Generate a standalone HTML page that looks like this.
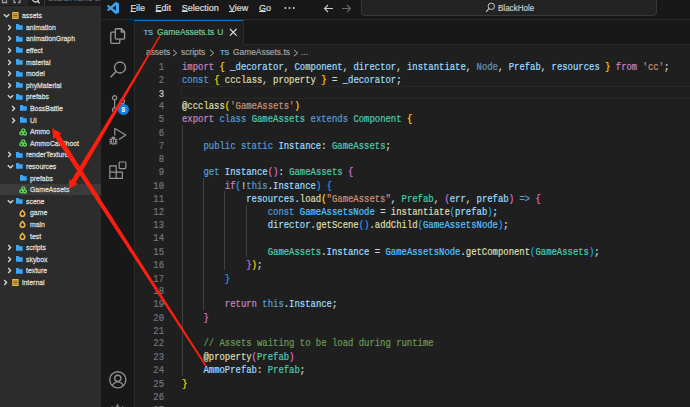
<!DOCTYPE html>
<html><head><meta charset="utf-8">
<style>
*{margin:0;padding:0;box-sizing:border-box}
html,body{width:690px;height:407px;overflow:hidden;background:#1f1f1f;position:relative;font-family:"Liberation Sans",sans-serif}
.abs{position:absolute}
#left{left:0;top:0;width:101px;height:407px;background:#2c2c2c}
#ltop{left:0;top:0;width:101px;height:6px;background:#262626;border-bottom:1px solid #1c1c1c}
.lt{position:absolute;height:11.6px;line-height:11.6px;font-size:8px;color:#d8d8d8;white-space:nowrap;transform:scaleX(0.86);transform-origin:0 0;-webkit-text-stroke:0.3px #d8d8d8}
.row{position:absolute;left:0;width:101px;height:11.6px;color:#c8c8c8;font-size:7px;line-height:11.6px;white-space:nowrap}
.row span.t{position:absolute;top:0}
.chev{position:absolute;top:0}
.ic{position:absolute}
#title{left:101px;top:0;width:589px;height:20px;background:#181818;border-bottom:1px solid #2b2b2b}
.menu{position:absolute;top:0;height:19px;line-height:17px;font-size:9px;color:#dcdcdc;-webkit-text-stroke:0.22px #dcdcdc}
u{text-decoration-thickness:0.7px;text-underline-offset:-0.3px}
#act{left:101px;top:20px;width:34px;height:387px;background:#181818;border-right:1px solid #2b2b2b}
#tabs{left:135px;top:20px;width:555px;height:25px;background:#181818;border-bottom:1px solid #2b2b2b}
#tab{left:134px;top:20px;width:110px;height:25px;background:#1f1f1f;border-top:1px solid #0078d4;border-left:1px solid #2b2b2b;border-right:1px solid #2b2b2b}
#editor{left:135px;top:45px;width:555px;height:362px;background:#1f1f1f}
.bc{position:absolute;top:46.3px;height:13px;line-height:13px;font-size:9px;color:#a9a9a9;white-space:nowrap;-webkit-text-stroke:0.15px #a9a9a9;transform:scaleX(0.933);transform-origin:0 0}
pre{position:absolute;font-family:"Liberation Mono",monospace;font-size:8.93px;line-height:11.7857px;white-space:pre;-webkit-text-stroke-width:0.2px;transform:scaleY(1.12);transform-origin:0 0}
#nums{left:134px;top:62.3px;width:30px;text-align:right;color:#6e7681}
#code{left:182px;top:62.3px;color:#d4d4d4}
.k{color:#c586c0}.s{color:#569cd6}.v{color:#9cdcfe}.ty{color:#4ec9b0}.f{color:#dcdcaa}.str{color:#ce9178}.c{color:#6a9955}.cn{color:#4fc1ff}
.b1{color:#ffd700}.b2{color:#da70d6}.b3{color:#179fff}.dim{color:#9cdcfe;opacity:.6}
.guide{position:absolute;width:1px;background:#404040}
</style></head><body>
<div id="left" class="abs"></div>
<div id="ltop" class="abs"></div>
<div class="abs" style="left:28px;top:0;width:73px;height:6px;background:#1b1b1b"></div>
<div class="abs" style="left:44px;top:0;width:1px;height:6px;background:#3a3a3a"></div>
<svg class="abs" style="left:0;top:-5.5px" width="26" height="10" viewBox="0 0 26 10" fill="none" stroke="#9a9a9a" stroke-width="1.3"><path d="M2.5 2 V7.5 H6.5 M6.5 4 V8.5"/><path d="M14 3 V7.5 H16 M20 3 V7.5 H18"/></svg>
<svg class="abs" style="left:30.5px;top:-5.5px" width="10" height="10" viewBox="0 0 10 10" fill="none" stroke="#d0d0d0" stroke-width="1.3"><circle cx="4.5" cy="4" r="3"/><path d="M6.7 6.3 L8.8 8.4"/></svg>
<div class="abs" style="left:48px;top:-5.8px;font-size:7.5px;line-height:9px;color:#6f7d92;white-space:nowrap">Search name or</div>


<!-- tree rows -->
<div id="tree">
<svg class="abs" style="left:2.5px;top:13.0px" width="7" height="5" viewBox="0 0 7 5"><path d="M0.8 1.2 L3.5 3.8 L6.2 1.2" fill="none" stroke="#d6d6d6" stroke-width="1.35"/></svg>
<svg class="abs" style="left:11.5px;top:12.0px" width="7" height="7" viewBox="0 0 7 7"><rect x="0.2" y="0" width="6.4" height="7" fill="#eabb45"/><rect x="1.2" y="1.5" width="4.4" height="0.9" fill="#7a5a18"/><rect x="1.2" y="3.1" width="4.4" height="0.9" fill="#7a5a18"/><rect x="1.2" y="4.7" width="4.4" height="0.9" fill="#7a5a18"/></svg>
<div class="lt" style="left:21.8px;top:10.1px">assets</div>
<svg class="abs" style="left:7.0px;top:23.8px" width="5" height="7" viewBox="0 0 5 7"><path d="M1.2 1.1 L3.6 3.5 L1.2 5.9" fill="none" stroke="#d6d6d6" stroke-width="1.35"/></svg>
<svg class="abs" style="left:15.6px;top:24.1px" width="7" height="6" viewBox="0 0 7 6"><path d="M0 0 H2.8 L3.5 1.2 H6.7 V5.8 H0 Z" fill="#3aa6f8"/></svg>
<div class="lt" style="left:25.8px;top:21.7px">animation</div>
<svg class="abs" style="left:7.0px;top:35.4px" width="5" height="7" viewBox="0 0 5 7"><path d="M1.2 1.1 L3.6 3.5 L1.2 5.9" fill="none" stroke="#d6d6d6" stroke-width="1.35"/></svg>
<svg class="abs" style="left:15.6px;top:35.7px" width="7" height="6" viewBox="0 0 7 6"><path d="M0 0 H2.8 L3.5 1.2 H6.7 V5.8 H0 Z" fill="#3aa6f8"/></svg>
<div class="lt" style="left:25.8px;top:33.3px">animationGraph</div>
<svg class="abs" style="left:7.0px;top:47.0px" width="5" height="7" viewBox="0 0 5 7"><path d="M1.2 1.1 L3.6 3.5 L1.2 5.9" fill="none" stroke="#d6d6d6" stroke-width="1.35"/></svg>
<svg class="abs" style="left:15.6px;top:47.3px" width="7" height="6" viewBox="0 0 7 6"><path d="M0 0 H2.8 L3.5 1.2 H6.7 V5.8 H0 Z" fill="#3aa6f8"/></svg>
<div class="lt" style="left:25.8px;top:44.9px">effect</div>
<svg class="abs" style="left:7.0px;top:58.6px" width="5" height="7" viewBox="0 0 5 7"><path d="M1.2 1.1 L3.6 3.5 L1.2 5.9" fill="none" stroke="#d6d6d6" stroke-width="1.35"/></svg>
<svg class="abs" style="left:15.6px;top:58.9px" width="7" height="6" viewBox="0 0 7 6"><path d="M0 0 H2.8 L3.5 1.2 H6.7 V5.8 H0 Z" fill="#3aa6f8"/></svg>
<div class="lt" style="left:25.8px;top:56.5px">material</div>
<svg class="abs" style="left:7.0px;top:70.2px" width="5" height="7" viewBox="0 0 5 7"><path d="M1.2 1.1 L3.6 3.5 L1.2 5.9" fill="none" stroke="#d6d6d6" stroke-width="1.35"/></svg>
<svg class="abs" style="left:15.6px;top:70.5px" width="7" height="6" viewBox="0 0 7 6"><path d="M0 0 H2.8 L3.5 1.2 H6.7 V5.8 H0 Z" fill="#3aa6f8"/></svg>
<div class="lt" style="left:25.8px;top:68.1px">model</div>
<svg class="abs" style="left:7.0px;top:81.8px" width="5" height="7" viewBox="0 0 5 7"><path d="M1.2 1.1 L3.6 3.5 L1.2 5.9" fill="none" stroke="#d6d6d6" stroke-width="1.35"/></svg>
<svg class="abs" style="left:15.6px;top:82.1px" width="7" height="6" viewBox="0 0 7 6"><path d="M0 0 H2.8 L3.5 1.2 H6.7 V5.8 H0 Z" fill="#3aa6f8"/></svg>
<div class="lt" style="left:25.8px;top:79.7px">phyMaterial</div>
<svg class="abs" style="left:6.5px;top:94.2px" width="7" height="5" viewBox="0 0 7 5"><path d="M0.8 1.2 L3.5 3.8 L6.2 1.2" fill="none" stroke="#d6d6d6" stroke-width="1.35"/></svg>
<svg class="abs" style="left:15.6px;top:93.7px" width="7" height="6" viewBox="0 0 7 6"><path d="M0 0 H2.8 L3.5 1.2 H6.7 V5.8 H0 Z" fill="#3aa6f8"/></svg>
<div class="lt" style="left:25.8px;top:91.3px">prefabs</div>
<svg class="abs" style="left:11.0px;top:105.0px" width="5" height="7" viewBox="0 0 5 7"><path d="M1.2 1.1 L3.6 3.5 L1.2 5.9" fill="none" stroke="#d6d6d6" stroke-width="1.35"/></svg>
<svg class="abs" style="left:19.6px;top:105.3px" width="7" height="6" viewBox="0 0 7 6"><path d="M0 0 H2.8 L3.5 1.2 H6.7 V5.8 H0 Z" fill="#3aa6f8"/></svg>
<div class="lt" style="left:29.8px;top:102.9px">BossBattle</div>
<svg class="abs" style="left:11.0px;top:116.6px" width="5" height="7" viewBox="0 0 5 7"><path d="M1.2 1.1 L3.6 3.5 L1.2 5.9" fill="none" stroke="#d6d6d6" stroke-width="1.35"/></svg>
<svg class="abs" style="left:19.6px;top:116.9px" width="7" height="6" viewBox="0 0 7 6"><path d="M0 0 H2.8 L3.5 1.2 H6.7 V5.8 H0 Z" fill="#3aa6f8"/></svg>
<div class="lt" style="left:29.8px;top:114.5px">UI</div>
<svg class="abs" style="left:18.6px;top:127.5px" width="8" height="8" viewBox="0 0 8 8" fill="none" stroke="#5ccf55" stroke-width="1.45"><circle cx="4.3" cy="2.4" r="1.55"/><circle cx="2.4" cy="5.3" r="1.55"/><circle cx="5.8" cy="5.4" r="1.55"/></svg>
<div class="lt" style="left:29.8px;top:126.1px">Ammo</div>
<svg class="abs" style="left:18.6px;top:139.1px" width="8" height="8" viewBox="0 0 8 8" fill="none" stroke="#5ccf55" stroke-width="1.45"><circle cx="4.3" cy="2.4" r="1.55"/><circle cx="2.4" cy="5.3" r="1.55"/><circle cx="5.8" cy="5.4" r="1.55"/></svg>
<div class="lt" style="left:29.8px;top:137.7px">AmmoCarShoot</div>
<svg class="abs" style="left:7.0px;top:151.4px" width="5" height="7" viewBox="0 0 5 7"><path d="M1.2 1.1 L3.6 3.5 L1.2 5.9" fill="none" stroke="#d6d6d6" stroke-width="1.35"/></svg>
<svg class="abs" style="left:15.6px;top:151.7px" width="7" height="6" viewBox="0 0 7 6"><path d="M0 0 H2.8 L3.5 1.2 H6.7 V5.8 H0 Z" fill="#3aa6f8"/></svg>
<div class="lt" style="left:25.8px;top:149.3px">renderTexture</div>
<svg class="abs" style="left:6.5px;top:163.8px" width="7" height="5" viewBox="0 0 7 5"><path d="M0.8 1.2 L3.5 3.8 L6.2 1.2" fill="none" stroke="#d6d6d6" stroke-width="1.35"/></svg>
<svg class="abs" style="left:15.6px;top:163.3px" width="7" height="6" viewBox="0 0 7 6"><path d="M0 0 H2.8 L3.5 1.2 H6.7 V5.8 H0 Z" fill="#3aa6f8"/></svg>
<div class="lt" style="left:25.8px;top:160.9px">resources</div>
<svg class="abs" style="left:19.6px;top:174.9px" width="7" height="6" viewBox="0 0 7 6"><path d="M0 0 H2.8 L3.5 1.2 H6.7 V5.8 H0 Z" fill="#3aa6f8"/></svg>
<div class="lt" style="left:29.8px;top:172.5px">prefabs</div>
<div class="abs" style="left:0;top:183.8px;width:101px;height:11.4px;background:#3b3b3b"></div>
<svg class="abs" style="left:18.6px;top:185.5px" width="8" height="8" viewBox="0 0 8 8" fill="none" stroke="#5ccf55" stroke-width="1.45"><circle cx="4.3" cy="2.4" r="1.55"/><circle cx="2.4" cy="5.3" r="1.55"/><circle cx="5.8" cy="5.4" r="1.55"/></svg>
<div class="lt" style="left:29.8px;top:184.1px">GameAssets</div>
<svg class="abs" style="left:6.5px;top:198.6px" width="7" height="5" viewBox="0 0 7 5"><path d="M0.8 1.2 L3.5 3.8 L6.2 1.2" fill="none" stroke="#d6d6d6" stroke-width="1.35"/></svg>
<svg class="abs" style="left:15.6px;top:198.1px" width="7" height="6" viewBox="0 0 7 6"><path d="M0 0 H2.8 L3.5 1.2 H6.7 V5.8 H0 Z" fill="#3aa6f8"/></svg>
<div class="lt" style="left:25.8px;top:195.7px">scene</div>
<svg class="abs" style="left:18.9px;top:208.6px" width="7" height="8" viewBox="0 0 7 8"><path d="M3.5 0.2 C4.3 1.5 6.6 2.9 6.6 4.9 A3.1 3.1 0 0 1 0.4 4.9 C0.4 2.9 2.7 1.5 3.5 0.2 Z" fill="#e6b04a"/><path d="M3.5 2.5 C3.9 3.2 4.9 4.0 4.9 5.0 A1.4 1.4 0 0 1 2.1 5.0 C2.1 4.0 3.1 3.2 3.5 2.5 Z" fill="#222"/></svg>
<div class="lt" style="left:29.8px;top:207.3px">game</div>
<svg class="abs" style="left:18.9px;top:220.2px" width="7" height="8" viewBox="0 0 7 8"><path d="M3.5 0.2 C4.3 1.5 6.6 2.9 6.6 4.9 A3.1 3.1 0 0 1 0.4 4.9 C0.4 2.9 2.7 1.5 3.5 0.2 Z" fill="#e6b04a"/><path d="M3.5 2.5 C3.9 3.2 4.9 4.0 4.9 5.0 A1.4 1.4 0 0 1 2.1 5.0 C2.1 4.0 3.1 3.2 3.5 2.5 Z" fill="#222"/></svg>
<div class="lt" style="left:29.8px;top:218.9px">main</div>
<svg class="abs" style="left:18.9px;top:231.8px" width="7" height="8" viewBox="0 0 7 8"><path d="M3.5 0.2 C4.3 1.5 6.6 2.9 6.6 4.9 A3.1 3.1 0 0 1 0.4 4.9 C0.4 2.9 2.7 1.5 3.5 0.2 Z" fill="#e6b04a"/><path d="M3.5 2.5 C3.9 3.2 4.9 4.0 4.9 5.0 A1.4 1.4 0 0 1 2.1 5.0 C2.1 4.0 3.1 3.2 3.5 2.5 Z" fill="#222"/></svg>
<div class="lt" style="left:29.8px;top:230.5px">test</div>
<svg class="abs" style="left:7.0px;top:244.2px" width="5" height="7" viewBox="0 0 5 7"><path d="M1.2 1.1 L3.6 3.5 L1.2 5.9" fill="none" stroke="#d6d6d6" stroke-width="1.35"/></svg>
<svg class="abs" style="left:15.6px;top:244.5px" width="7" height="6" viewBox="0 0 7 6"><path d="M0 0 H2.8 L3.5 1.2 H6.7 V5.8 H0 Z" fill="#3aa6f8"/></svg>
<div class="lt" style="left:25.8px;top:242.1px">scripts</div>
<svg class="abs" style="left:7.0px;top:255.8px" width="5" height="7" viewBox="0 0 5 7"><path d="M1.2 1.1 L3.6 3.5 L1.2 5.9" fill="none" stroke="#d6d6d6" stroke-width="1.35"/></svg>
<svg class="abs" style="left:15.6px;top:256.1px" width="7" height="6" viewBox="0 0 7 6"><path d="M0 0 H2.8 L3.5 1.2 H6.7 V5.8 H0 Z" fill="#3aa6f8"/></svg>
<div class="lt" style="left:25.8px;top:253.7px">skybox</div>
<svg class="abs" style="left:7.0px;top:267.4px" width="5" height="7" viewBox="0 0 5 7"><path d="M1.2 1.1 L3.6 3.5 L1.2 5.9" fill="none" stroke="#d6d6d6" stroke-width="1.35"/></svg>
<svg class="abs" style="left:15.6px;top:267.7px" width="7" height="6" viewBox="0 0 7 6"><path d="M0 0 H2.8 L3.5 1.2 H6.7 V5.8 H0 Z" fill="#3aa6f8"/></svg>
<div class="lt" style="left:25.8px;top:265.3px">texture</div>
<svg class="abs" style="left:3.0px;top:279.0px" width="5" height="7" viewBox="0 0 5 7"><path d="M1.2 1.1 L3.6 3.5 L1.2 5.9" fill="none" stroke="#d6d6d6" stroke-width="1.35"/></svg>
<svg class="abs" style="left:11.5px;top:278.8px" width="7" height="7" viewBox="0 0 7 7"><rect x="0.2" y="0" width="6.4" height="7" fill="#eabb45"/><rect x="1.2" y="1.5" width="4.4" height="0.9" fill="#7a5a18"/><rect x="1.2" y="3.1" width="4.4" height="0.9" fill="#7a5a18"/><rect x="1.2" y="4.7" width="4.4" height="0.9" fill="#7a5a18"/></svg>
<div class="lt" style="left:21.8px;top:276.9px">internal</div>

</div>

<div id="title" class="abs"></div>

<svg class="abs" style="left:107px;top:2.4px" width="12" height="12" viewBox="0 0 100 100"><path fill="#3ca5f3" d="M96.5 10.8 L75.9 0.9 A6.2 6.2 0 0 0 68.8 2.1 L29.4 38 L12.2 25 A4.2 4.2 0 0 0 6.9 25.2 L1.4 30.3 A4.2 4.2 0 0 0 1.4 36.5 L16.3 50 L1.4 63.6 A4.2 4.2 0 0 0 1.4 69.8 L6.9 74.8 A4.2 4.2 0 0 0 12.2 75 L29.4 62 L68.8 98 A6.2 6.2 0 0 0 75.9 99.2 L96.5 89.3 A6.2 6.2 0 0 0 100 83.7 V16.3 A6.2 6.2 0 0 0 96.5 10.8 Z M75 72.7 L45.1 50 L75 27.3 Z"/></svg>
<div class="menu" style="left:130.5px"><u>F</u>ile</div>
<div class="menu" style="left:155.5px"><u>E</u>dit</div>
<div class="menu" style="left:181.8px"><u>S</u>election</div>
<div class="menu" style="left:229px"><u>V</u>iew</div>
<div class="menu" style="left:259px"><u>G</u>o</div>
<svg class="abs" style="left:283px;top:5px" width="13" height="6" viewBox="0 0 13 6" fill="#d0d0d0"><circle cx="2.3" cy="3" r="1"/><circle cx="6.5" cy="3" r="1"/><circle cx="10.7" cy="3" r="1"/></svg>
<svg class="abs" style="left:323px;top:3.5px" width="11" height="9" viewBox="0 0 11 9"><path d="M10 4.5 H1.5 M5 1 L1.5 4.5 L5 8" fill="none" stroke="#cccccc" stroke-width="1.1"/></svg>
<svg class="abs" style="left:340.5px;top:3.5px" width="11" height="9" viewBox="0 0 11 9"><path d="M1 4.5 H9.5 M6 1 L9.5 4.5 L6 8" fill="none" stroke="#6a6a6a" stroke-width="1.1"/></svg>
<div class="abs" style="left:360.5px;top:-3px;width:296.5px;height:19px;border:1px solid #383838;border-radius:4px;background:#232323"></div>
<svg class="abs" style="left:485px;top:2px" width="11" height="11" viewBox="0 0 11 11"><circle cx="6.3" cy="4.3" r="3.2" fill="none" stroke="#cccccc" stroke-width="1"/><path d="M4 6.7 L1 9.8" stroke="#cccccc" stroke-width="1.1"/></svg>
<div class="abs" style="left:498.3px;top:0.3px;height:16px;line-height:16px;font-size:8.6px;color:#d4d4d4;transform:scaleX(0.935);transform-origin:0 0;-webkit-text-stroke:0.15px #d4d4d4">BlackHole</div>
<div id="act" class="abs"></div>
<div id="tabs" class="abs"></div>
<div id="tab" class="abs"></div>
<div id="editor" class="abs"></div>
<div class="abs" style="left:143.6px;top:27.3px;height:12px;line-height:12px;font-size:7.8px;font-weight:bold;color:#5aa7de;letter-spacing:-0.4px">TS</div>
<div class="abs" style="left:157px;top:26.4px;height:13px;line-height:13px;font-size:8.45px;color:#73c991;-webkit-text-stroke:0.2px #73c991">GameAssets.ts</div>
<div class="abs" style="left:217.3px;top:26.4px;height:13px;line-height:13px;font-size:8.45px;color:#73c991;-webkit-text-stroke:0.2px #73c991">U</div>
<svg class="abs" style="left:228.5px;top:28.3px" width="8.5" height="8.5" viewBox="0 0 8.5 8.5"><path d="M0.9 0.9 L7.6 7.6 M7.6 0.9 L0.9 7.6" stroke="#e8e8e8" stroke-width="1.2"/></svg>
<div class="bc" style="left:145.5px">assets</div>
<svg class="abs" style="left:172px;top:48.6px" width="6" height="8" viewBox="0 0 6 8"><path d="M1 0.9 L4.7 4 L1 7.1" fill="none" stroke="#b0b0b0" stroke-width="1"/></svg>
<div class="bc" style="left:181px">scripts</div>
<svg class="abs" style="left:209px;top:48.6px" width="6" height="8" viewBox="0 0 6 8"><path d="M1 0.9 L4.7 4 L1 7.1" fill="none" stroke="#b0b0b0" stroke-width="1"/></svg>
<div class="abs" style="left:220px;top:47.2px;height:12px;line-height:12px;font-size:7.8px;font-weight:bold;color:#5aa7de;letter-spacing:-0.4px">TS</div>
<div class="bc" style="left:233px">GameAssets.ts</div>
<svg class="abs" style="left:293px;top:48.6px" width="6" height="8" viewBox="0 0 6 8"><path d="M1 0.9 L4.7 4 L1 7.1" fill="none" stroke="#b0b0b0" stroke-width="1"/></svg>
<div class="bc" style="left:301px">...</div>

<svg class="abs" style="left:109px;top:28px" width="18" height="18" viewBox="0 0 18 18" fill="none" stroke="#959595" stroke-width="1.35" stroke-linejoin="round"><path d="M5.8 4.1 H2.8 Q1.8 4.1 1.8 5.1 V14.3 Q1.8 15.3 2.8 15.3 H9.8 Q10.8 15.3 10.8 14.3 V11.4"/><path d="M6.3 1.6 Q6.3 0.7 7.3 0.7 H12.5 L15.6 3.8 V10.1 Q15.6 11.1 14.6 11.1 H7.3 Q6.3 11.1 6.3 10.1 Z"/><path d="M12.3 0.8 V4 H15.5"/></svg>
<svg class="abs" style="left:109px;top:59.5px" width="18" height="19" viewBox="0 0 18 19" fill="none" stroke="#959595" stroke-width="1.35"><circle cx="11" cy="7.5" r="5.5"/><path d="M7.1 11.4 L1.5 17.2" stroke-width="1.5"/></svg>
<svg class="abs" style="left:109.5px;top:92.7px" width="18" height="20" viewBox="0 0 18 20" fill="none" stroke="#959595" stroke-width="1.2"><circle cx="4.6" cy="4.8" r="2.1"/><circle cx="4.6" cy="17" r="2.1"/><circle cx="12.4" cy="8.4" r="2.1"/><path d="M4.6 6.9 V14.9 M12.4 10.5 Q12.4 13.5 6.4 15.6"/></svg>
<div class="abs" style="left:117.5px;top:103.5px;width:11.5px;height:11.5px;border-radius:50%;background:#1080dc;color:#fff;font-size:6.5px;line-height:11.5px;text-align:center;font-weight:bold">8</div>
<svg class="abs" style="left:109px;top:126px" width="19" height="20" viewBox="0 0 19 20" fill="none" stroke="#959595" stroke-width="1.2" stroke-linejoin="round"><path d="M5.8 9.6 V2.4 L16.8 8.9 L10 13.4"/><path d="M2.6 12 Q4.4 10.2 6.2 12"/><ellipse cx="4.4" cy="15.3" rx="2.3" ry="2.9"/><path d="M4.4 13 V17.6" stroke-width="0.9"/><path d="M0.4 13.4 H2.1 M6.7 13.4 H8.4 M0.2 15.6 H2.1 M6.7 15.6 H8.6 M0.6 18.2 L2.2 17.2 M8.2 18.2 L6.6 17.2"/></svg>
<svg class="abs" style="left:108px;top:160px" width="20" height="20" viewBox="0 0 20 20" fill="none" stroke="#959595" stroke-width="1.2" stroke-linejoin="round"><path d="M1.8 5.8 H8.2 V12.2 H14.4 V18.4 H1.8 Z M1.8 12.2 H8.2 V18.4"/><rect x="11.2" y="2" width="6.6" height="6.6" rx="0.8"/></svg>
<svg class="abs" style="left:108px;top:370px" width="20" height="20" viewBox="0 0 20 20" fill="none" stroke="#8f8f8f" stroke-width="1.35"><circle cx="9.8" cy="9.8" r="8.1"/><circle cx="9.8" cy="8.3" r="3.1"/><path d="M4.4 15.3 Q6.4 11.8 9.8 11.8 Q13.2 11.8 15.2 15.3"/></svg>
<svg class="abs" style="left:108px;top:403px" width="19" height="19" viewBox="0 0 19 19" fill="none" stroke="#959595" stroke-width="1.3"><circle cx="9.5" cy="9.5" r="5.6"/><circle cx="9.5" cy="9.5" r="2.3"/><path d="M9.5 1.2 V3.6 M3.6 3.6 L5.2 5.2 M15.4 3.6 L13.8 5.2" stroke-width="1.6"/></svg>


<pre id="nums">1
2
<span style="color:#cccccc">3</span>
4
5
6
7
8
9
10
11
12
13
14
15
16
17
18
19
20
21
22
23
24
25
26
27</pre>
<div class="abs" style="left:181px;top:86.3px;width:520px;height:12.7px;border:1px solid #282828"></div>

<div class="guide" style="left:181.5px;top:125.3px;height:250.8px"></div>
<div class="guide" style="left:202.9px;top:178.1px;height:132px"></div>
<div class="guide" style="left:224.3px;top:191.3px;height:79.2px"></div>
<div class="guide" style="left:245.7px;top:204.5px;height:52.8px"></div>
<pre id="code"><span class="k">import</span> <span class="b1">{</span> <span class="v">_decorator</span>, <span class="v">Component</span>, <span class="v">director</span>, <span class="v">instantiate</span>, <span class="dim">Node</span>, <span class="v">Prefab</span>, <span class="v">resources</span> <span class="b1">}</span> <span class="k">from</span> <span class="str">'cc'</span>;
<span class="s">const</span> <span class="b1">{</span> <span class="f">ccclass</span>, <span class="f">property</span> <span class="b1">}</span> = <span class="v">_decorator</span>;

<span class="f">@ccclass</span><span class="b1">(</span><span class="str">'GameAssets'</span><span class="b1">)</span>
<span class="k">export</span> <span class="s">class</span> <span class="ty">GameAssets</span> <span class="s">extends</span> <span class="ty">Component</span> <span class="b1">{</span>

    <span class="s">public</span> <span class="s">static</span> <span class="v">Instance</span>: <span class="ty">GameAssets</span>;

    <span class="s">get</span> <span class="v">Instance</span><span class="b2">()</span>: <span class="ty">GameAssets</span> <span class="b2">{</span>
        <span class="k">if</span><span class="b3">(</span>!<span class="s">this</span>.<span class="v">Instance</span><span class="b3">)</span> <span class="b3">{</span>
            <span class="v">resources</span>.<span class="f">load</span><span class="b1">(</span><span class="str">"GameAssets"</span>, <span class="ty">Prefab</span>, <span class="b2">(</span><span class="v">err</span>, <span class="v">prefab</span><span class="b2">)</span> <span class="s">=&gt;</span> <span class="b2">{</span>
                <span class="s">const</span> <span class="cn">GameAssetsNode</span> = <span class="f">instantiate</span><span class="b3">(</span><span class="v">prefab</span><span class="b3">)</span>;
                <span class="v">director</span>.<span class="f">getScene</span><span class="b3">()</span>.<span class="f">addChild</span><span class="b3">(</span><span class="cn">GameAssetsNode</span><span class="b3">)</span>;

                <span class="ty">GameAssets</span>.<span class="v">Instance</span> = <span class="cn">GameAssetsNode</span>.<span class="f">getComponent</span><span class="b3">(</span><span class="ty">GameAssets</span><span class="b3">)</span>;
            <span class="b2">}</span><span class="b1">)</span>;
        <span class="b3">}</span>

        <span class="k">return</span> <span class="s">this</span>.<span class="v">Instance</span>;
    <span class="b2">}</span>

    <span class="c">// Assets waiting to be load during runtime</span>
    <span class="f">@property</span><span class="b2">(</span><span class="ty">Prefab</span><span class="b2">)</span>
    <span class="v">AmmoPrefab</span>: <span class="ty">Prefab</span>;
<span class="b1">}</span>
</pre>
<svg class="abs" style="left:0;top:0" width="690" height="407" viewBox="0 0 690 407"><polygon fill="#ff1e0e" points="159.6,35.2 71.4,180.2 69.3,178.9 69.0,189.0 77.7,183.9 75.6,182.7 160.8,35.8"/><polygon fill="#ff1e0e" points="206.7,365.6 59.5,134.8 61.6,133.5 52.3,128.3 53.2,138.9 55.3,137.6 205.3,366.4"/></svg>
</body></html>
